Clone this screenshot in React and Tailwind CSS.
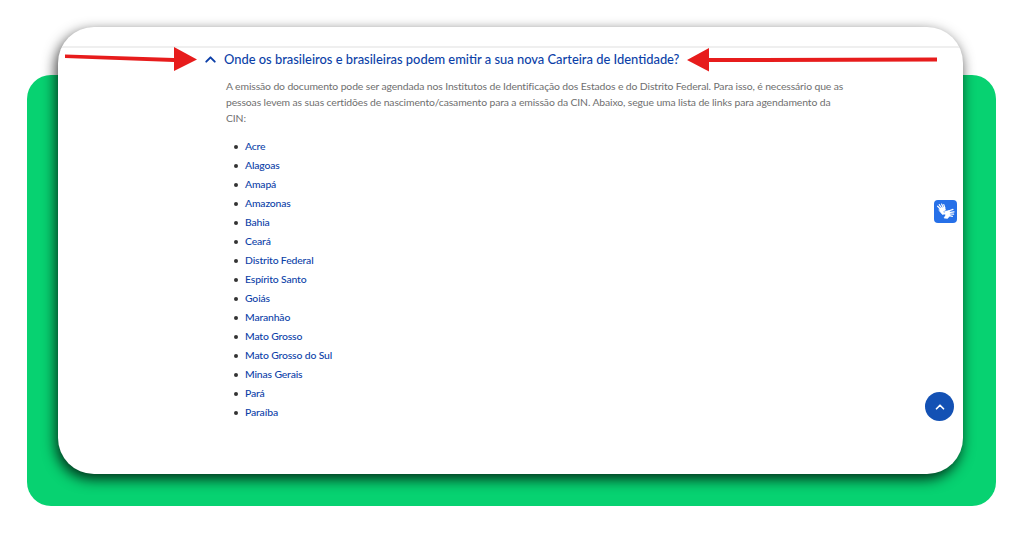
import React from "react";
import { ChevronUp } from "lucide-react";

const states = [
  "Acre",
  "Alagoas",
  "Amapá",
  "Amazonas",
  "Bahia",
  "Ceará",
  "Distrito Federal",
  "Espírito Santo",
  "Goiás",
  "Maranhão",
  "Mato Grosso",
  "Mato Grosso do Sul",
  "Minas Gerais",
  "Pará",
  "Paraíba",
];

// libras / sign language hands, drawn since the packages' glyph differs
function HandsIcon() {
  return (
    <svg width="19" height="17" viewBox="0 0 19 17" fill="none" stroke="white" strokeLinecap="round">
      <g strokeWidth="1.2">
        <path d="M5 6.5 1.6 3.2" />
        <path d="M6 5.5 3.2 1.7" />
        <path d="M7.4 5 5.6 1" />
        <path d="M8.8 5 7.8 1.6" />
        <path d="M12.5 8 17 6.4" />
        <path d="M13 9.6 18 8.8" />
        <path d="M13 11 17.6 11.2" />
        <path d="M12.4 12.4 16.4 13.4" />
      </g>
      <path d="M3.5 5.5 8.6 4.2 9.5 7 7 8.8 8.8 11 6.4 11.5 3.5 8Z" fill="white" strokeWidth="0.6" />
      <path d="M9 8.2 13.6 7.6 14 12.6 11.5 15.4 8 15 9.8 12 8 10.4Z" fill="white" strokeWidth="0.6" />
    </svg>
  );
}

export default function App() {
  return (
    <div className="grid w-[1024px] h-[536px] overflow-hidden bg-white font-['Lato',sans-serif]">
      {/* green panel behind the card */}
      <div className="col-start-1 row-start-1 ml-[27px] mt-[75px] w-[969px] h-[431px] rounded-[24px] bg-[#07d271]" />

      <div className="relative col-start-1 row-start-1 ml-[58px] mt-[27px] w-[905px] h-[447px] rounded-[36px] bg-white shadow-[-2px_5px_14px_rgba(0,0,0,0.8)]">
        <div className="mt-[19px] mx-[4px] border-t-2 border-[#efefef] pl-[141px]">
          <div className="flex items-center gap-[5px] h-[23px]">
            <ChevronUp size={17} strokeWidth={2.75} className="text-[#0c3fa8] -ml-[1px]" />
            <h2 className="text-[12.9px] font-medium text-[#0c3fa8]">
              Onde os brasileiros e brasileiras podem emitir a sua nova Carteira de Identidade?
            </h2>
          </div>

          <p className="mt-[7px] ml-[23px] w-[620px] text-[10.4px] tracking-[-0.12px] leading-[16px] text-[#6f6f6f]">
            A emissão do documento pode ser agendada nos Institutos de Identificação dos Estados e do Distrito Federal. Para isso, é necessário que as pessoas levem as suas certidões de nascimento/casamento para a emissão da CIN. Abaixo, segue uma lista de links para agendamento da CIN:
          </p>

          <ul className="mt-[11px] ml-[31px] text-[10.4px] tracking-[-0.15px]">
            {states.map((s) => (
              <li key={s} className="flex items-center gap-[7px] h-[19px]">
                <span className="size-[4px] rounded-full bg-[#333]" />
                <a href="#" className="font-medium text-[#0c3fa8]">{s}</a>
              </li>
            ))}
          </ul>
        </div>

        {/* floating buttons */}
        <button className="absolute left-[876px] top-[173px] flex items-center justify-center size-[23px] rounded-[4px] bg-[#2670e8]">
          <HandsIcon />
        </button>
        <button className="absolute left-[867px] top-[365px] flex items-center justify-center size-[29px] rounded-full bg-[#1351b4] text-white">
          <ChevronUp size={14} strokeWidth={3} />
        </button>

        {/* red annotation arrows */}
        <svg className="absolute left-[-58px] top-[-27px] pointer-events-none" width="1024" height="536">
          <polygon points="65,54.5 174,58 174,47 197,59.5 174,71 174,62 65,58" fill="#e71c1c" />
          <polygon points="937,57.5 709,58 709,48 687,60 709,71.5 709,62 937,61.5" fill="#e71c1c" />
        </svg>
      </div>
    </div>
  );
}
